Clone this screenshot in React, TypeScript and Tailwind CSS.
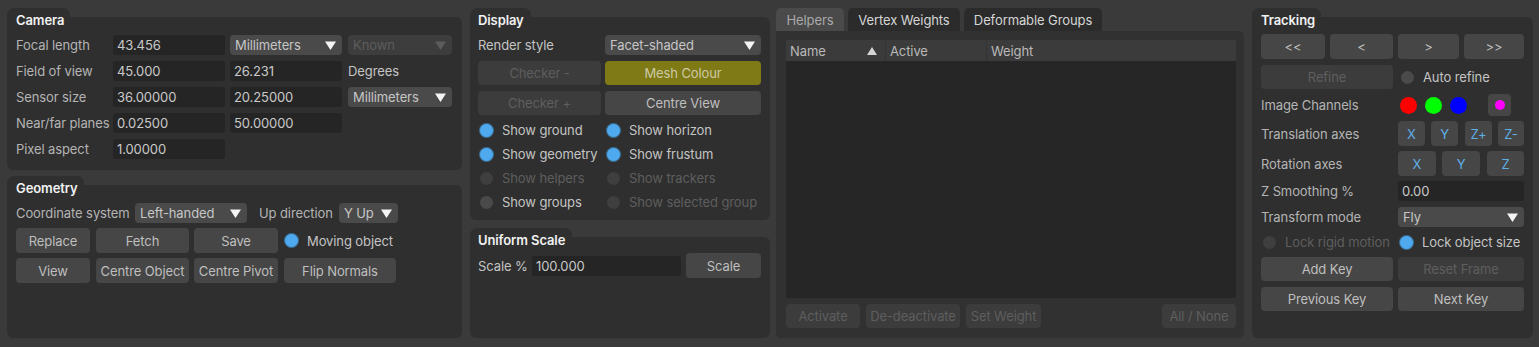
import React from "react";

const PANEL = "bg-[#2f2f2f]";

function Panel({
  title,
  className = "",
  bodyClass = "",
  children,
}: {
  title: string;
  className?: string;
  bodyClass?: string;
  children?: React.ReactNode;
}) {
  return (
    <div className={`flex flex-col ${className}`}>
      <div
        className={`h-[9px] w-fit shrink-0 overflow-hidden rounded-t-[7px] ${PANEL} pl-[9px] pr-[6px] text-[13px] font-semibold leading-[16px]`}
      >
        <span className="invisible whitespace-nowrap">{title}</span>
      </div>
      <div className={`flex-1 rounded-[6px] rounded-tl-none ${PANEL} ${bodyClass}`}>
        <div className="-mt-[5px] h-[16px] whitespace-nowrap text-[13px] font-semibold leading-[16px] text-[#f2f2f2]">
          {title}
        </div>
        {children}
      </div>
    </div>
  );
}

function Tri({ color = "#f2f2f2" }: { color?: string }) {
  return (
    <svg width="11" height="9" viewBox="0 0 11 9" className="shrink-0">
      <polygon points="0,0.5 11,0.5 5.5,9" fill={color} />
    </svg>
  );
}

function Field({ className = "", children }: { className?: string; children?: React.ReactNode }) {
  return (
    <div
      className={`flex h-[20px] shrink-0 items-center rounded-[3px] bg-[#252525] pl-[4px] text-[13px] text-[#c9c9c9] ${className}`}
    >
      {children}
    </div>
  );
}

function Combo({
  className = "",
  disabled = false,
  children,
}: {
  className?: string;
  disabled?: boolean;
  children?: React.ReactNode;
}) {
  return (
    <div
      className={`flex h-[20px] shrink-0 items-center justify-between rounded-[4px] pl-[5px] pr-[6px] text-[13px] ${
        disabled ? "bg-[#3d3d3d] text-[#5c5c5c]" : "bg-[#4a4a4a] text-[#c6c6c6]"
      } ${className}`}
    >
      <span>{children}</span>
      <Tri color={disabled ? "#5c5c5c" : "#f4f4f4"} />
    </div>
  );
}

type Tone = "normal" | "disabled" | "olive" | "axis";

function Btn({
  className = "",
  tone = "normal",
  short = false,
  children,
}: {
  className?: string;
  tone?: Tone;
  short?: boolean;
  children?: React.ReactNode;
}) {
  const toneCls =
    tone === "disabled"
      ? "bg-[#3c3c3c] text-[#5e5e5e]"
      : tone === "olive"
      ? "bg-[#7f7a16] text-[#cdc9a6]"
      : tone === "axis"
      ? "bg-[#464646] text-[#5eaee8]"
      : "bg-[#464646] text-[#bfbfbf]";
  return (
    <div
      className={`flex shrink-0 items-center justify-center whitespace-nowrap rounded-[4px] text-[13px] ${
        short ? "h-[24px]" : "h-[25px]"
      } ${toneCls} ${className}`}
    >
      {children}
    </div>
  );
}

function Radio({
  checked = false,
  disabled = false,
  label,
  className = "",
}: {
  checked?: boolean;
  disabled?: boolean;
  label: string;
  className?: string;
}) {
  return (
    <div className={`flex items-center whitespace-nowrap text-[13px] ${className}`}>
      <span
        className={`h-[13px] w-[13px] shrink-0 rounded-full ${
          checked
            ? "bg-[#4fa9ee] shadow-[0_0_0_1px_#3b6f96]"
            : disabled
            ? "bg-[#3f3f3f]"
            : "bg-[#4a4a4a]"
        }`}
      />
      <span className={`ml-[9px] ${disabled ? "text-[#5e5e5e]" : "text-[#c4c4c4]"}`}>{label}</span>
    </div>
  );
}

function Label({
  className = "",
  bright = false,
  children,
}: {
  className?: string;
  bright?: boolean;
  children?: React.ReactNode;
}) {
  return (
    <div
      className={`shrink-0 whitespace-nowrap text-[13px] ${bright ? "text-[#c4c4c4]" : "text-[#b4b4b4]"} ${className}`}
    >
      {children}
    </div>
  );
}

function CamRow({ label, children }: { label: string; children?: React.ReactNode }) {
  return (
    <div className="flex h-[20px] items-center">
      <Label className="w-[97px]">{label}</Label>
      {children}
    </div>
  );
}

export default function App() {
  return (
    <div className="flex h-[347px] w-[1539px] overflow-hidden bg-[#3a3a3a] pb-[9px] pl-[7px] pt-[8px] font-[Inter,'Liberation_Sans',sans-serif] leading-[16px] tracking-[-0.1px]">
      {/* Left column */}
      <div className="flex w-[455px] flex-col gap-[6px]">
        <Panel title="Camera" className="h-[162px]" bodyClass="pl-[9px]">
          <div className="mt-[7px] flex flex-col gap-[6px]">
            <CamRow label="Focal length">
              <Field className="w-[112px]">43.456</Field>
              <Combo className="ml-[5px] w-[112px]">Millimeters</Combo>
              <Combo disabled className="ml-[6px] w-[104px]">
                Known
              </Combo>
            </CamRow>
            <CamRow label="Field of view">
              <Field className="w-[112px]">45.000</Field>
              <Field className="ml-[5px] w-[112px]">26.231</Field>
              <Label bright className="ml-[6px]">
                Degrees
              </Label>
            </CamRow>
            <CamRow label="Sensor size">
              <Field className="w-[112px]">36.00000</Field>
              <Field className="ml-[5px] w-[112px]">20.25000</Field>
              <Combo className="ml-[6px] w-[104px]">Millimeters</Combo>
            </CamRow>
            <CamRow label="Near/far planes">
              <Field className="w-[112px]">0.02500</Field>
              <Field className="ml-[5px] w-[112px]">50.00000</Field>
            </CamRow>
            <CamRow label="Pixel aspect">
              <Field className="w-[112px]">1.00000</Field>
            </CamRow>
          </div>
        </Panel>

        <Panel title="Geometry" className="flex-1" bodyClass="pl-[9px]">
          <div className="mt-[7px] flex h-[20px] items-center">
            <Label className="w-[119px]">Coordinate system</Label>
            <Combo className="w-[112px]">Left-handed</Combo>
            <Label className="ml-[12px] w-[80px]">Up direction</Label>
            <Combo className="w-[59px]">Y Up</Combo>
          </div>
          <div className="mt-[5px] flex items-center">
            <Btn className="w-[74px]">Replace</Btn>
            <Btn className="ml-[6px] w-[93px]">Fetch</Btn>
            <Btn className="ml-[5px] w-[84px]">Save</Btn>
            <Radio checked label="Moving object" className="ml-[7px]" />
          </div>
          <div className="mt-[5px] flex items-center">
            <Btn className="w-[74px]">View</Btn>
            <Btn className="ml-[6px] w-[93px]">Centre Object</Btn>
            <Btn className="ml-[5px] w-[84px]">Centre Pivot</Btn>
            <Btn className="ml-[6px] w-[112px]">Flip Normals</Btn>
          </div>
        </Panel>
      </div>

      {/* Display column */}
      <div className="ml-[8px] flex w-[300px] flex-col gap-[8px]">
        <Panel title="Display" className="h-[212px]" bodyClass="pl-[8px] pr-[9px]">
          <div className="mt-[7px] flex h-[20px] items-center">
            <Label bright className="w-[127px]">
              Render style
            </Label>
            <Combo className="w-[156px]">Facet-shaded</Combo>
          </div>
          <div className="mt-[6px] flex">
            <Btn tone="disabled" short className="w-[123px]">
              Checker -
            </Btn>
            <Btn tone="olive" short className="ml-[4px] w-[156px]">
              Mesh Colour
            </Btn>
          </div>
          <div className="mt-[6px] flex">
            <Btn tone="disabled" short className="w-[123px]">
              Checker +
            </Btn>
            <Btn short className="ml-[4px] w-[156px]">
              Centre View
            </Btn>
          </div>
          <div className="mt-[3px] grid grid-cols-[127px_156px]">
            <Radio checked label="Show ground" className="h-[24px] pl-[2px]" />
            <Radio checked label="Show horizon" className="h-[24px] pl-[2px]" />
            <Radio checked label="Show geometry" className="h-[24px] pl-[2px]" />
            <Radio checked label="Show frustum" className="h-[24px] pl-[2px]" />
            <Radio disabled label="Show helpers" className="h-[24px] pl-[2px]" />
            <Radio disabled label="Show trackers" className="h-[24px] pl-[2px]" />
            <Radio label="Show groups" className="h-[24px] pl-[2px]" />
            <Radio disabled label="Show selected group" className="h-[24px] pl-[2px]" />
          </div>
        </Panel>

        <Panel title="Uniform Scale" className="flex-1" bodyClass="pl-[8px]">
          <div className="mt-[5px] flex items-center">
            <Label bright className="w-[54px]">
              Scale %
            </Label>
            <Field className="w-[149px]">100.000</Field>
            <Btn className="ml-[5px] w-[75px]">Scale</Btn>
          </div>
        </Panel>
      </div>

      {/* Tab widget */}
      <div className="ml-[6px] flex w-[468px] flex-col">
        <div className="flex h-[23px] shrink-0 gap-[4px] text-[13px]">
          <div className="flex w-[68px] items-center justify-center rounded-t-[5px] bg-[#4a4a4a] text-[#a9a9a9]">
            Helpers
          </div>
          <div className="flex w-[112px] items-center justify-center rounded-t-[5px] bg-[#2b2b2b] text-[#d6d6d6]">
            Vertex Weights
          </div>
          <div className="flex w-[138px] items-center justify-center rounded-t-[5px] bg-[#2b2b2b] text-[#d6d6d6]">
            Deformable Groups
          </div>
        </div>
        <div className="flex flex-1 flex-col rounded-b-[5px] rounded-tr-[5px] bg-[#313131] pb-[10px] pl-[10px] pr-[8px] pt-[9px]">
          <div className="flex flex-1 flex-col bg-[#262626]">
            <div className="flex h-[21px] shrink-0 items-center bg-[#3b3b3b] text-[13px] text-[#b9b9b9]">
              <div className="flex h-full w-[100px] items-center justify-between border-r border-[#333333] pl-[4px] pr-[8px]">
                <span>Name</span>
                <svg width="10" height="8" viewBox="0 0 10 8">
                  <polygon points="5,0 10,8 0,8" fill="#d6d6d6" />
                </svg>
              </div>
              <div className="flex h-full w-[101px] items-center border-r border-[#333333] pl-[4px]">Active</div>
              <div className="pl-[4px]">Weight</div>
            </div>
            <div className="flex-1" />
          </div>
          <div className="mt-[6px] flex">
            <Btn tone="disabled" short className="w-[74px]">
              Activate
            </Btn>
            <Btn tone="disabled" short className="ml-[6px] w-[94px]">
              De-deactivate
            </Btn>
            <Btn tone="disabled" short className="ml-[6px] w-[75px]">
              Set Weight
            </Btn>
            <div className="flex-1" />
            <Btn tone="disabled" short className="w-[74px]">
              All / None
            </Btn>
          </div>
        </div>
      </div>

      {/* Tracking */}
      <Panel title="Tracking" className="ml-[8px] w-[281px]" bodyClass="pl-[9px]">
        <div className="mt-[6px] flex">
          <Btn className="w-[64px]">&lt;&lt;</Btn>
          <Btn className="ml-[5px] w-[63px]">&lt;</Btn>
          <Btn className="ml-[5px] w-[61px]">&gt;</Btn>
          <Btn className="ml-[5px] w-[60px]">&gt;&gt;</Btn>
        </div>
        <div className="mt-[6px] flex items-center">
          <Btn tone="disabled" short className="w-[132px]">
            Refine
          </Btn>
          <Radio label="Auto refine" className="ml-[8px]" />
        </div>
        <div className="mt-[5px] flex h-[22px] items-center">
          <Label className="w-[139px]">Image Channels</Label>
          <span className="h-[17px] w-[17px] rounded-full bg-[#ff0000]" />
          <span className="ml-[8px] h-[17px] w-[17px] rounded-full bg-[#00ff00]" />
          <span className="ml-[8px] h-[17px] w-[17px] rounded-full bg-[#0000ff]" />
          <div className="ml-[21px] flex h-[22px] w-[23px] items-center justify-center rounded-[4px] bg-[#464646]">
            <span className="h-[10px] w-[10px] rounded-full bg-[#ff00ff]" />
          </div>
        </div>
        <div className="mt-[5px] flex items-center">
          <Label className="w-[137px]">Translation axes</Label>
          <Btn tone="axis" className="w-[27px]">
            X
          </Btn>
          <Btn tone="axis" className="ml-[6px] w-[27px]">
            Y
          </Btn>
          <Btn tone="axis" className="ml-[7px] w-[27px]">
            Z+
          </Btn>
          <Btn tone="axis" className="ml-[6px] w-[26px]">
            Z-
          </Btn>
        </div>
        <div className="mt-[5px] flex items-center">
          <Label className="w-[137px]">Rotation axes</Label>
          <Btn tone="axis" className="w-[38px]">
            X
          </Btn>
          <Btn tone="axis" className="ml-[6px] w-[38px]">
            Y
          </Btn>
          <Btn tone="axis" className="ml-[7px] w-[37px]">
            Z
          </Btn>
        </div>
        <div className="mt-[5px] flex items-center">
          <Label className="w-[137px]">Z Smoothing %</Label>
          <Field className="w-[126px]">0.00</Field>
        </div>
        <div className="mt-[6px] flex items-center">
          <Label className="w-[137px]">Transform mode</Label>
          <Combo className="w-[126px]">Fly</Combo>
        </div>
        <div className="mt-[2px] flex h-[26px] items-center">
          <Radio disabled label="Lock rigid motion" className="w-[139px] pl-[2px]" />
          <Radio checked label="Lock object size" />
        </div>
        <div className="mt-[2px] flex">
          <Btn short className="w-[132px]">
            Add Key
          </Btn>
          <Btn tone="disabled" short className="ml-[5px] w-[126px]">
            Reset Frame
          </Btn>
        </div>
        <div className="mt-[6px] flex">
          <Btn short className="w-[132px]">
            Previous Key
          </Btn>
          <Btn short className="ml-[5px] w-[126px]">
            Next Key
          </Btn>
        </div>
      </Panel>
    </div>
  );
}
